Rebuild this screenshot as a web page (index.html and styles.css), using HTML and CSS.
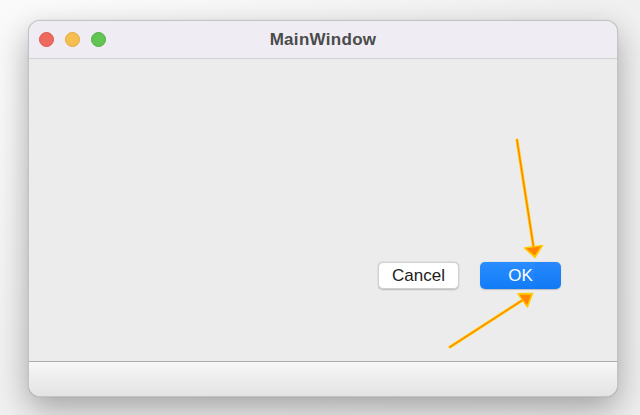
FILE: index.html
```html
<!DOCTYPE html>
<html>
<head>
<meta charset="utf-8">
<link rel="stylesheet" href="styles.css">
</head>
<body>
<div class="window">
  <div class="titlebar">
    <div class="lights">
      <span class="light red"></span>
      <span class="light yellow"></span>
      <span class="light green"></span>
    </div>
    <div class="title">MainWindow</div>
    <div></div>
  </div>
  <div class="content">
    <button class="btn cancel">Cancel</button>
    <button class="btn ok">OK</button>
  </div>
  <div class="statusbar"></div>
</div>
<svg class="arrows" width="640" height="415" viewBox="0 0 640 415">
  <g stroke="#ffcc00" stroke-linejoin="round" stroke-linecap="round">
    <line x1="517" y1="140" x2="533.4" y2="246" stroke-width="3"/>
    <polygon points="535,257.5 542.5,245.5 524.5,248" fill="#ffcc00" stroke-width="1.4"/>
    <line x1="450" y1="347" x2="522" y2="300.5" stroke-width="3"/>
    <polygon points="532.5,293.5 527.5,307 518,293.8" fill="#ffcc00" stroke-width="1.4"/>
  </g>
  <g stroke="#ff8400" fill="#ff8400" stroke-linecap="round">
    <line x1="517" y1="140" x2="533.4" y2="246" stroke-width="1.4"/>
    <polygon points="534.8,255.5 541,246.3 526,248.5" stroke="none"/>
    <line x1="450" y1="347" x2="522" y2="300.5" stroke-width="1.4"/>
    <polygon points="531,294.8 527,305.2 519.5,294.8" stroke="none"/>
  </g>
</svg>
</body>
</html>
```

FILE: styles.css
```css
html, body {
  margin: 0;
  padding: 0;
}
body {
  width: 640px;
  height: 415px;
  overflow: hidden;
  background: radial-gradient(ellipse at 10% 0%, #fbfbfb 0%, #f1f1f1 60%, #eeeeee 100%);
  font-family: "Liberation Sans", Arial, sans-serif;
  position: relative;
  padding-top: 20px;
  padding-left: 28px;
  box-sizing: border-box;
}
.window {
  width: 590px;
  height: 377px;
  box-sizing: border-box;
  border: 1px solid #c4c4c4;
  border-radius: 12px;
  overflow: hidden;
  display: flex;
  flex-direction: column;
  background: #ececec;
  box-shadow: 0 12px 32px rgba(0, 0, 0, 0.32), 0 0 1px rgba(0, 0, 0, 0.25);
}
.titlebar {
  height: 37px;
  flex: none;
  background: #efedf3;
  border-bottom: 1px solid #d2d2d2;
  display: grid;
  grid-template-columns: 1fr auto 1fr;
  align-items: center;
}
.lights {
  display: flex;
  gap: 11px;
  padding-left: 10px;
}
.light {
  width: 15px;
  height: 15px;
  border-radius: 50%;
  box-sizing: border-box;
}
.red { background: #ee6a5e; border: 0.5px solid #e0574b; }
.yellow { background: #f5bf4f; border: 0.5px solid #e2a93d; }
.green { background: #61c554; border: 0.5px solid #50ae43; }
.title {
  font-weight: bold;
  font-size: 17px;
  letter-spacing: 0.3px;
  color: #4b4b4b;
}
.content {
  flex: 1;
  display: flex;
  justify-content: flex-end;
  align-items: flex-end;
  gap: 21px;
  padding: 0 56px 72px 0;
}
.btn {
  height: 27px;
  border-radius: 5px;
  font-family: "Liberation Sans", Arial, sans-serif;
  font-size: 17px;
  padding: 0;
  display: flex;
  align-items: center;
  justify-content: center;
  box-sizing: border-box;
}
.cancel {
  width: 81px;
  background: #ffffff;
  color: #222222;
  border: 0.5px solid #d0d0d0;
  box-shadow: 0 0.5px 1.5px rgba(0, 0, 0, 0.22);
}
.ok {
  width: 81px;
  color: #ffffff;
  border: none;
  background:
    linear-gradient(to right, transparent 0, transparent 55px, rgba(0, 70, 200, 0.06) 55px),
    linear-gradient(to bottom, #2a8dff, #117cf7);
  box-shadow: 0 0.5px 1px rgba(0, 0, 0, 0.2);
}
.statusbar {
  height: 34px;
  flex: none;
  border-top: 1px solid #adadad;
  background: linear-gradient(to bottom, #f7f7f7, #e3e3e3);
}
.arrows {
  position: absolute;
  left: 0;
  top: 0;
  pointer-events: none;
}
```
